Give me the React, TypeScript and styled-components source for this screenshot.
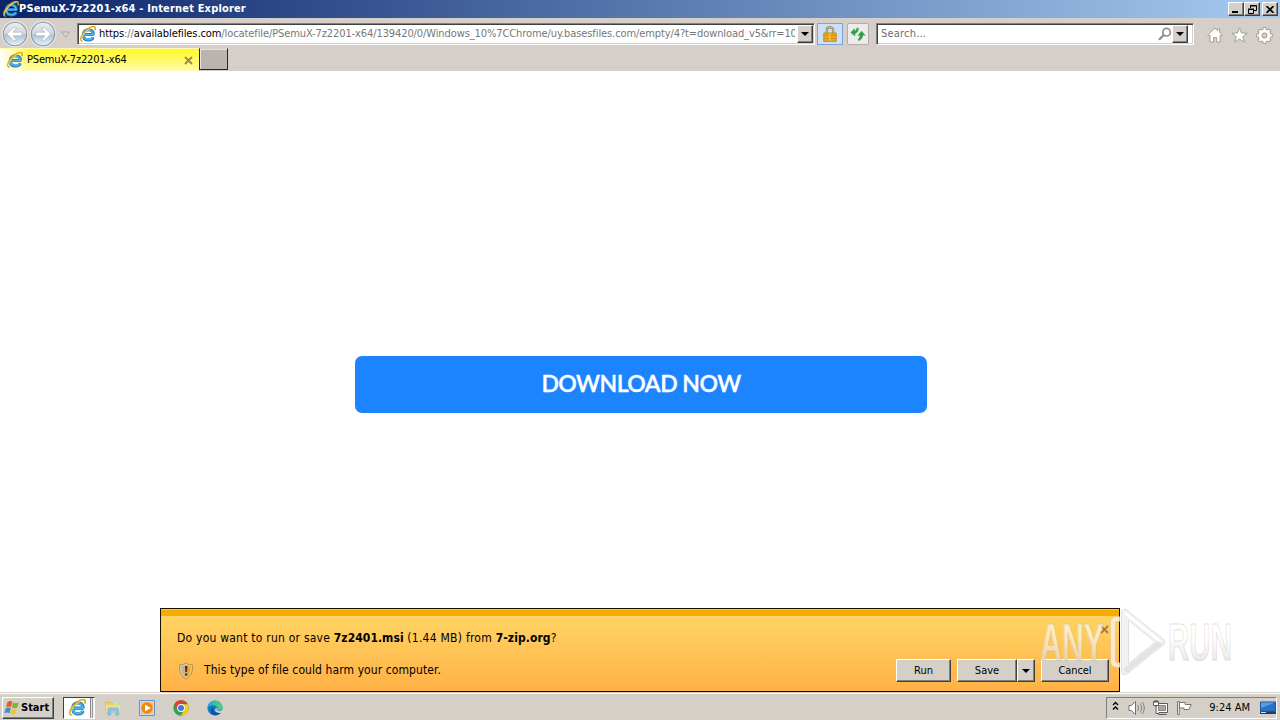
import React from "react";
import styled, { createGlobalStyle, css } from "styled-components";

const GlobalStyle = createGlobalStyle`
  * { box-sizing: border-box; }
  body {
    margin: 0;
    overflow: hidden;
    background: #fff;
    font-family: "DejaVu Sans Condensed", "DejaVu Sans", sans-serif;
    font-stretch: condensed;
    font-size: 11px;
    color: #000;
  }
  svg { display: block; flex: none; }
`;

const raised = css`
  background: #d4d0c8;
  border: 1px solid;
  border-color: #fff #404040 #404040 #fff;
  box-shadow: inset -1px -1px 0 #808080;
`;

const Screen = styled.div`
  display: flex;
  flex-direction: column;
  width: 1280px;
  height: 720px;
`;

const Text = styled.span<{ $ls?: number; $color?: string; $size?: number; $bold?: boolean }>`
  white-space: pre;
  line-height: 14px;
  letter-spacing: ${(p) => p.$ls ?? 0}px;
  color: ${(p) => p.$color ?? "#000"};
  font-size: ${(p) => p.$size ?? 11}px;
  font-weight: ${(p) => (p.$bold ? 700 : 400)};
`;

const TitleBar = styled.div`
  display: flex;
  align-items: center;
  height: 18px;
  padding: 0 2px 0 3px;
  background: linear-gradient(90deg, #0a246a, #a6caf0);
`;

const WindowButtons = styled.div`
  display: flex;
  margin-left: auto;
`;

const WindowButton = styled.div<{ $gap?: number }>`
  ${raised}
  display: flex;
  align-items: center;
  justify-content: center;
  width: 16px;
  height: 14px;
  margin-left: ${(p) => p.$gap ?? 0}px;
`;

const Toolbar = styled.div`
  display: flex;
  align-items: center;
  height: 30px;
  padding-left: 1px;
  background: #d6cfc9;
  border-top: 1px solid #d4d0c8;
`;

const NavButtons = styled.div`
  display: flex;
  width: 76px;
`;

const Field = styled.div<{ $width: number }>`
  display: flex;
  align-items: center;
  width: ${(p) => p.$width}px;
  height: 22px;
  padding: 0 1px 0 2px;
  background: #fff;
  border: 1px solid;
  border-color: #808080 #fff #fff #808080;
  box-shadow: inset 1px 1px 0 #404040, inset -1px -1px 0 #d4d0c8;
`;

const Url = styled.div`
  display: flex;
  width: 697px;
  margin: 0 2px 0 3px;
  overflow: hidden;
`;

const DropButton = styled.div<{ $width?: number; $height?: number }>`
  ${raised}
  display: flex;
  flex: none;
  align-items: center;
  justify-content: center;
  width: ${(p) => p.$width ?? 16}px;
  height: ${(p) => p.$height ?? 18}px;
`;

const LockButton = styled.div`
  display: flex;
  align-items: center;
  justify-content: center;
  width: 26px;
  height: 22px;
  margin: 0 4px 0 2px;
  background: #cce0fa;
  border: 1px solid #7aa5dc;
`;

const RefreshButton = styled.div`
  display: flex;
  align-items: center;
  justify-content: center;
  width: 22px;
  height: 22px;
  margin-right: 7px;
  background: #eeecea;
  border: 1px solid #b0adaa;
  border-radius: 2px;
`;

const SearchText = styled.div`
  display: flex;
  width: 279px;
  padding-left: 2px;
`;

const Tools = styled.div`
  display: flex;
  gap: 8px;
  margin-left: 13px;
  padding-top: 3px;
`;

const TabRow = styled.div`
  display: flex;
  height: 23px;
  background: linear-gradient(#d6cfc9 19px, #c8cbc8 19px, #c8cbc8 20px, #d6cfc9 20px);
`;

const Tab = styled.div`
  display: flex;
  align-items: center;
  width: 199px;
  height: 23px;
  padding: 0 6px 0 7px;
  background: linear-gradient(90deg, #fff 0, rgba(255, 255, 255, 0) 30px),
    linear-gradient(#fffb28, #fff873 60%, #fffcb4);
  border-top: 1px solid #fdfab0;

  svg:last-child { margin-left: auto; }
  ${Text} { margin-left: 4px; }
`;

const NewTab = styled.div`
  width: 29px;
  height: 22px;
  background: #bbb3b0;
  border: 1px solid #292522;
  border-top-color: #d6cfc9;
  box-shadow: inset 1px 1px 0 #e8e4e0;
`;

const Page = styled.main`
  position: relative;
  display: flex;
  flex-direction: column;
  align-items: center;
  height: 621px;
  padding-top: 285px;
  background: #fff;
`;

const Download = styled.button`
  width: 572px;
  height: 57px;
  margin-left: 2px;
  padding: 0 0 4px;
  border: 0;
  border-radius: 7px;
  background: #1c84ff;
  color: #fff;
  font: 600 23px Lato, sans-serif;
  letter-spacing: -0.52px;
  -webkit-text-stroke: 0.35px #fff;
`;

const Notice = styled.div`
  display: flex;
  flex-direction: column;
  width: 960px;
  height: 84px;
  margin-top: auto;
  padding: 7px 10px 0 16px;
  border: 1px solid #1a1000;
  background: linear-gradient(#f5c84c 1px, #f5ab00 1px, #f5ab00 7px, #ffd464 7px, #ffb146);
`;

const NoticeTop = styled.div`
  display: flex;
  align-items: center;
  height: 28px;
  padding-top: 16px;

  svg { margin: -18px 0 0 auto; }
`;

const NoticeBottom = styled.div`
  display: flex;
  align-items: center;
  height: 23px;
  margin-top: 15px;
  padding-left: 1px;

  > ${Text} { margin: -2px auto 0 10px; }
`;

const NoticeButton = styled.div<{ $width: number; $gap?: number }>`
  ${raised}
  display: flex;
  align-items: center;
  justify-content: center;
  width: ${(p) => p.$width}px;
  height: 23px;
  margin-left: ${(p) => p.$gap ?? 0}px;
  padding-top: 1px;
`;

const Watermark = styled.div`
  position: absolute;
  left: 1034px;
  top: 535px;
`;

const Taskbar = styled.div`
  display: flex;
  align-items: center;
  height: 28px;
  padding: 2px 0 0 2px;
  background: #d4d0c8;
  border-top: 1px solid #d4d0c8;
  box-shadow: inset 0 1px 0 #fff;
`;

const StartButton = styled.div`
  ${raised}
  display: flex;
  align-items: center;
  width: 52px;
  height: 22px;
  padding-left: 1px;
`;

const ActiveTask = styled.div`
  display: flex;
  align-items: center;
  width: 32px;
  height: 22px;
  margin-left: 9px;
  padding-left: 5px;
  border: 1px solid;
  border-color: #404040 #fff #fff #404040;
  background: linear-gradient(90deg, #fff 26px, #888 26px, #888 27px, #e4e0dc 27px, #e4e0dc 28px, #999 28px, #999 29px, #f4f2f0 29px);
`;

const Tasks = styled.div`
  display: flex;
  gap: 18px;
  margin-left: 10px;
`;

const Tray = styled.div`
  display: flex;
  align-items: center;
  width: 171px;
  height: 22px;
  margin: 0 3px 0 auto;
  padding-left: 5px;
  border: 1px solid;
  border-color: #808080 #fff #fff #808080;

  > svg:first-child { margin-top: -4px; }
`;

const TrayIcons = styled.div`
  display: flex;
  gap: 7px;
  width: 79px;
  margin: 0 15px 0 9px;
`;

const IeIcon = ({ size = 16 }: { size?: number }) => (
  <svg width={size} height={size} viewBox="0 0 16 16" fill="none">
    <path d="M14 8.600H4M13.200 11.200c-1.400 3.800-9.800 4.400-9.800-2.300 0-7 10.200-6.800 10-.3" stroke="#1272b6" strokeWidth="3" />
    <path d="M14.200 8.600H4M12.800 11.300c-1.400 3.200-9.300 3.900-9.300-2.400 0-6.400 9.600-6.300 9.500-.3" stroke="#4fb5ea" strokeWidth="1.800" />
    <path d="M2.600 15.200C-.2 15 .4 11.200 3 7.600 6.300 2.800 12.900-1.100 14.900 1.100c.7.900.3 2.200-.3 3.300" stroke="#dfa41a" strokeWidth="1.500" />
    <path d="M1.500 13.600C.8 11 7.500 2.200 13.800 1.200" stroke="#ffe468" strokeWidth=".9" />
  </svg>
);

const Arrow = ({ flip = false }: { flip?: boolean }) => (
  <svg width="28" height="28" viewBox="0 0 28 28">
    <defs>
      <linearGradient id="orb" x2="0" y2="1">
        <stop stopColor="#eceef0" />
        <stop offset=".45" stopColor="#d3d9df" />
        <stop offset=".55" stopColor="#b3c2d0" />
        <stop offset="1" stopColor="#e2f4fb" />
      </linearGradient>
    </defs>
    <circle cx="14" cy="14" r="13.4" fill="#eae8e6" />
    <circle cx="14" cy="14" r="11.700" fill="url(#orb)" stroke="#8b97a5" strokeWidth="1.100" />
    <path
      transform={flip ? "rotate(180 14 14)" : undefined}
      d="M6 14l6.500-6.200h3.400l-4 4.400H21v3.600h-9.100l4 4.400h-3.400z"
      fill="#fff" stroke="#a3b1bf" strokeWidth=".6"
    />
  </svg>
);

const Triangle = () => (
  <svg width="8" height="4" viewBox="0 0 8 4"><path d="M0 0h8L4 4z" fill="#000" /></svg>
);

const CloseX = ({ color = "#8f8a58" }: { color?: string }) => (
  <svg width="9" height="9" viewBox="0 0 9 9"><path d="M1 1l7 7M8 1L1 8" stroke={color} strokeWidth="1.800" /></svg>
);

const LockIcon = () => (
  <svg width="14" height="16" viewBox="0 0 14 16">
    <path d="M3.800 8V4C3.800.5 10.200.5 10.200 4V8" fill="none" stroke="#8b7440" strokeWidth="2.200" />
    <path d="M3.800 8V4C3.800.8 10.200.8 10.200 4V8" fill="none" stroke="#e6d9a8" strokeWidth=".9" />
    <path d="M.8 7h12.400v8.300H.8z" fill="#e9a91c" stroke="#c08c1c" />
    <path d="M1.500 9.500h11M1.500 12.500h11" stroke="#c98c16" strokeWidth=".8" />
    <path d="M6.200 7.500h1.200v7.500H6.200z" fill="#f5cc60" />
  </svg>
);

const RefreshIcon = () => (
  <svg width="16" height="16" viewBox="0 0 16 16" fill="#2fa044" stroke="#2fa044" strokeWidth=".5">
    <path d="M.8 6.500L4.400 2.800l.2 2.200c1.200-.2 2-1.200 2.300-3l1.500.3C8.400 5.500 7 7 4.800 7.500l.2 2.500z" />
    <path d="M15.200 9.200l-3.600-4-3.700 4.100 2-.1c0 2.200-.6 3.400-1.900 4.400l.8 1.200c2.500-1.200 3.800-3 3.900-5.600z" />
  </svg>
);

const SearchIcon = () => (
  <svg width="14" height="14" viewBox="0 0 14 14" fill="none" stroke="#8b8b8b">
    <circle cx="8.600" cy="5.200" r="3.800" strokeWidth="1.600" /><path d="M5.700 8L1 12.700" strokeWidth="2.200" />
  </svg>
);

const HomeIcon = () => (
  <svg width="16" height="16" viewBox="0 0 16 16">
    <path d="M8 1l2.700 2.600V2h2v3.500L15.300 8l-1 1-1.200-.8V15H9.600v-4.500H6.500V15H3V8.200L1.700 9l-1-1z" fill="#fff" stroke="#9a9794" strokeWidth=".9" />
  </svg>
);

const StarIcon = () => (
  <svg width="17" height="16" viewBox="0 0 17 16">
    <path d="M8.500.8l2 5.200 5.700.2-4.500 3.500 1.700 5.500-4.900-3.200-4.900 3.200 1.700-5.500L.8 6.200 6.500 6z" fill="#fff" stroke="#9a9794" strokeWidth=".9" />
  </svg>
);

const GearIcon = () => (
  <svg width="17" height="17" viewBox="0 0 17 17" fill="none">
    <g stroke="#999693">
      <path d="M8.500.3v16.400M.3 8.500h16.400M2.700 2.700l11.600 11.600M14.300 2.700L2.700 14.300" strokeWidth="3.600" />
      <circle cx="8.500" cy="8.500" r="4.400" strokeWidth="4.600" />
    </g>
    <g stroke="#fff">
      <path d="M8.500 1.100v14.800M1.100 8.500h14.800M3.300 3.300l10.400 10.400M13.700 3.300L3.300 13.700" strokeWidth="2" />
      <circle cx="8.500" cy="8.500" r="4.400" strokeWidth="3" />
    </g>
    <circle cx="8.500" cy="8.500" r="2.500" fill="#d6cfc9" stroke="#999693" />
  </svg>
);

const ShieldIcon = () => (
  <svg width="16" height="18" viewBox="0 0 16 18">
    <path d="M8 1c2 1.400 4 1.900 6.400 1.800C15 9 13.600 14 8 17 2.400 14 1 9 1.600 2.800 4 2.900 6 2.400 8 1z" fill="#d8cda3" stroke="#a48743" strokeWidth=".8" />
    <path d="M8 3c1.400 1 2.800 1.400 4.600 1.400C12.900 9 11.600 12.800 8 15z" fill="#f0a61b" />
    <path d="M8 3C6.600 4 5.200 4.400 3.400 4.400 3.100 9 4.400 12.800 8 15z" fill="#b6b6a0" />
    <path d="M7 4h2.400L9 10H7.400zM7 11.400h2.200v2H7z" fill="#6b1d05" />
  </svg>
);

const StartLogo = () => (
  <svg width="17" height="16" viewBox="0 0 17 16">
    <path d="M3.600 2C5.500.6 7 .8 8.400 1.800L7 7.200C5.400 6.200 3.800 6.200 2 7.300z" fill="#e65b27" />
    <path d="M9.200 2.300c1.800 1.200 3.600 1 5.600 0l-1.500 5.200c-2 1-3.800 1-5.500 0z" fill="#79b93c" />
    <path d="M1.800 8.200c1.700-1 3.400-1 5 0L5.400 13.300c-1.600-1-3.200-1-5 0z" fill="#3c8ed4" />
    <path d="M7.600 8.500c1.700 1 3.500 1 5.500 0l-1.500 5.200c-2 1-3.800 1-5.500 0z" fill="#f4c52c" />
  </svg>
);

const FolderIcon = () => (
  <svg width="16" height="16" viewBox="0 0 16 16">
    <path d="M1 2h5l1 1.500h7V12H1z" fill="#ecd06c" stroke="#d1b256" strokeWidth=".6" />
    <path d="M8 1.500h5.500V6H8z" fill="#c5dfaf" />
    <path d="M1 5h14v7H1z" fill="#f5dd84" />
    <path d="M3 15V9.500c0-1 .6-1.500 1.500-1.500h7.500c1 0 1.500.6 1.500 1.500V15h-2.600v-4H5.600v4z" fill="#8ac6e6" stroke="#5ba3ca" strokeWidth=".5" />
  </svg>
);

const PlayerIcon = () => (
  <svg width="16" height="16" viewBox="0 0 16 16">
    <path d="M.5.5h15v15H.5z" fill="#c8dff3" stroke="#5b94cc" />
    <path d="M2 2h12v12H2z" fill="#f4c08a" />
    <circle cx="8" cy="8" r="5.700" fill="#f1860f" />
    <path d="M6 4.500L11.800 8 6 11.500z" fill="#fff" />
  </svg>
);

const ChromeIcon = () => (
  <svg width="16" height="16" viewBox="0 0 16 16">
    <circle cx="8" cy="8" r="7.700" fill="#31a350" />
    <path d="M1.300 4.200A7.700 7.700 0 0 1 14.700 4.200H8L4.700 10z" fill="#e23e30" />
    <path d="M14.700 4.200A7.700 7.700 0 0 1 7.800 15.700L11.300 9.800 8 4.200z" fill="#fbc918" />
    <circle cx="8" cy="8" r="3.900" fill="#fff" />
    <circle cx="8" cy="8" r="3" fill="#3b78e7" />
  </svg>
);

const EdgeIcon = () => (
  <svg width="16" height="16" viewBox="0 0 16 16">
    <defs>
      <linearGradient id="edge"><stop stopColor="#20a8dc" /><stop offset="1" stopColor="#55d56d" /></linearGradient>
    </defs>
    <circle cx="8" cy="8" r="7.600" fill="#137bc9" />
    <path d="M.4 7.800C1-.5 13-2 15.400 6c.8 3.200-2 5-5.200 4.200-1-.3.2-1 0-2.400C9.600 4.800 3.400 3.800.4 7.800z" fill="url(#edge)" />
    <path d="M6.500 6.700c-2 4.400 3 8 7.600 5.300-3.600 5.500-11 3.400-10.300-2 .2-1.500 1.300-2.700 2.700-3.300z" fill="#164f9d" />
    <path d="M9.800 8.500c-.8 2 1.700 3.300 6.200 1.600l-1.200 2.400c-4 1.500-7.200-.6-6.800-2.900.3-1 1.300-1.700 1.800-1.100z" fill="#d4d0c8" />
  </svg>
);

const SpeakerIcon = () => (
  <svg width="17" height="16" viewBox="0 0 17 16" fill="none" stroke="#77736f">
    <path d="M1 5.500h2.500l4-4v13l-4-4H1z" fill="#fff" />
    <path d="M9.500 5c1.500 1.500 1.500 4.500 0 6M11.800 3.500c2.400 2.500 2.400 6.500 0 9M14 2c3 3.500 3 8.500 0 12" strokeWidth=".9" />
  </svg>
);

const NetworkIcon = () => (
  <svg width="17" height="16" viewBox="0 0 17 16" fill="none" stroke="#5b5855">
    <path d="M4.500 3.500h11v9h-11z" fill="#fff" />
    <path d="M6.500 5.500h7v5h-7z" fill="#aaa7a3" stroke="#8b8884" />
    <path d="M6.500 14.500h8M1.500 1.500h5v4h-5zM4 5.500v8h3" fill="#fff" />
    <path d="M3 0v3M5 0v3" />
  </svg>
);

const FlagIcon = () => (
  <svg width="17" height="16" viewBox="0 0 17 16" fill="#fff" stroke="#77736f">
    <path d="M1.500 1.500h1.800v13H1.500z" />
    <path d="M3.500 2.500h5.700v2h6l-2.400 5H8V8H3.500z" />
  </svg>
);

const MonitorIcon = () => (
  <svg width="16" height="14" viewBox="0 0 16 14">
    <path d="M.5 1h15v9.500H.5z" fill="#2971c7" stroke="#23508c" />
    <path d="M1 1.500h14L1 7z" fill="#5c9be2" />
    <path d="M0 11h16v2H0z" fill="#203d68" /><path d="M1 11.500h5" stroke="#c9e2f5" />
  </svg>
);

const AnyRunLogo = () => (
  <svg width="216" height="80" viewBox="0 0 216 80" overflow="visible">
    <defs>
      <linearGradient id="shade" x2="0" y2="1">
        <stop offset=".4" stopColor="#fff" />
        <stop offset=".8" stopColor="#dedede" />
      </linearGradient>
    </defs>
    <g
      fill="url(#shade)" fillOpacity=".6" stroke="#b4b0aa" strokeOpacity=".4" strokeWidth="1"
      fontFamily="'Liberation Sans Narrow', 'Liberation Sans', sans-serif" fontSize="52"
    >
      <text x="6" y="54" textLength="64" lengthAdjust="spacingAndGlyphs" fontWeight="700">ANY</text>
      <text x="134" y="54" textLength="64" lengthAdjust="spacingAndGlyphs" fontWeight="700">RUN</text>
    </g>
    <g fill="none" strokeLinejoin="round">
      <path d="M86 13h-3q-4 0-4 4v38q0 4 4 4h3" stroke="#c8b890" strokeOpacity=".35" strokeWidth="6" />
      <path d="M86 13h-3q-4 0-4 4v38q0 4 4 4h3" stroke="#fff" strokeOpacity=".65" strokeWidth="4.500" />
      <path d="M91 7v58l36-29z" stroke="#999" strokeOpacity=".35" strokeWidth="8" />
      <path d="M91 7v58l36-29z" stroke="#f4f4f4" strokeOpacity=".9" strokeWidth="6.500" />
      <path d="M91 65l36-29" stroke="#ccc" strokeOpacity=".4" strokeWidth="5" />
      <path d="M91 7l36 29" stroke="#fff" strokeWidth="2.500" />
    </g>
  </svg>
);

export default function App() {
  return (
    <Screen>
      <GlobalStyle />
      <TitleBar>
        <IeIcon />
        <Text $bold $ls={0.17} $color="#fff">PSemuX-7z2201-x64 - Internet Explorer</Text>
        <WindowButtons>
          <WindowButton>
            <svg width="8" height="8"><path d="M0 6h6v2H0z" /></svg>
          </WindowButton>
          <WindowButton>
            <svg width="9" height="9" fill="none" stroke="#000"><path d="M2.500 3V.5h6v5H6M2 1h7M.5 4.500h5v4h-5zM0 4h6" /></svg>
          </WindowButton>
          <WindowButton $gap={2}>
            <svg width="8" height="7" viewBox="0 0 8 7"><path d="M.5 0l7 7M7.500 0l-7 7" stroke="#000" strokeWidth="1.600" /></svg>
          </WindowButton>
        </WindowButtons>
      </TitleBar>

      <Toolbar>
        <NavButtons>
          <Arrow />
          <Arrow flip />
          <svg width="16" height="28"><path d="M4.500 12h8l-4 5z" fill="#dcd8d4" stroke="#aaa5a0" /></svg>
        </NavButtons>
        <Field $width={738}>
          <IeIcon />
          <Url>
            <Text $ls={-0.09}>https</Text>
            <Text $ls={-0.09} $color="#777">://</Text>
            <Text $ls={-0.09}>availablefiles.com</Text>
            <Text $ls={-0.1} $color="#777">/locatefile/PSemuX-7z2201-x64/139420/0/Windows_10%7CChrome/uy.basesfiles.com/empty/4?t=download_v5&amp;rr=10</Text>
          </Url>
          <DropButton><Triangle /></DropButton>
        </Field>
        <LockButton><LockIcon /></LockButton>
        <RefreshButton><RefreshIcon /></RefreshButton>
        <Field $width={318}>
          <SearchText><Text $ls={0.2} $color="#6d6d6d">Search...</Text></SearchText>
          <SearchIcon />
          <DropButton><Triangle /></DropButton>
        </Field>
        <Tools>
          <HomeIcon />
          <StarIcon />
          <GearIcon />
        </Tools>
      </Toolbar>

      <TabRow>
        <Tab>
          <IeIcon />
          <Text $ls={-0.18}>PSemuX-7z2201-x64</Text>
          <CloseX />
        </Tab>
        <NewTab />
      </TabRow>

      <Page>
        <Download>DOWNLOAD NOW</Download>
        <Notice>
          <NoticeTop>
            <Text $size={12} $ls={0.23}>Do you want to run or save </Text>
            <Text $size={12} $bold $ls={0.06}>7z2401.msi</Text>
            <Text $size={12} $ls={0.25}> (1.44 MB) from </Text>
            <Text $size={12} $bold $ls={0.08}>7-zip.org</Text>
            <Text $size={12}>?</Text>
            <CloseX color="#a87c3a" />
          </NoticeTop>
          <NoticeBottom>
            <ShieldIcon />
            <Text $size={12} $ls={0.09}>This type of file could harm your computer.</Text>
            <NoticeButton $width={55}><Text>Run</Text></NoticeButton>
            <NoticeButton $width={60} $gap={6}><Text>Save</Text></NoticeButton>
            <DropButton $width={18} $height={23}><Triangle /></DropButton>
            <NoticeButton $width={68} $gap={6}><Text $ls={-0.1}>Cancel</Text></NoticeButton>
          </NoticeBottom>
        </Notice>
        <Watermark><AnyRunLogo /></Watermark>
      </Page>

      <Taskbar>
        <StartButton>
          <StartLogo />
          <Text $bold>Start</Text>
        </StartButton>
        <ActiveTask><IeIcon size={17} /></ActiveTask>
        <Tasks>
          <FolderIcon />
          <PlayerIcon />
          <ChromeIcon />
          <EdgeIcon />
        </Tasks>
        <Tray>
          <svg width="7" height="10" fill="none" stroke="#000" strokeWidth="1.400"><path d="M1 4l2.500-2.500L6 4M1 8.500L3.500 6 6 8.500" /></svg>
          <TrayIcons>
            <SpeakerIcon />
            <NetworkIcon />
            <FlagIcon />
          </TrayIcons>
          <Text>9:24 AM</Text>
          <svg width="10" height="1" />
          <MonitorIcon />
        </Tray>
      </Taskbar>
    </Screen>
  );
}
